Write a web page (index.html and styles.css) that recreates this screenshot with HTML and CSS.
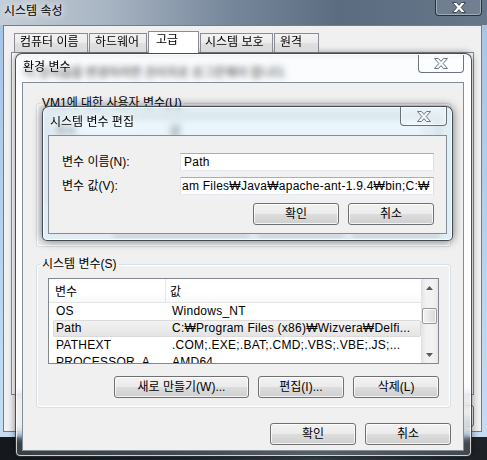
FILE: index.html
```html
<!DOCTYPE html>
<html lang="ko">
<head>
<meta charset="utf-8">
<title>시스템 속성</title>
<link rel="stylesheet" href="styles.css">
</head>
<body>
<div class="desktop">

  <div class="window outer">
    <div class="titlebar outer-titlebar">
      <span class="title-text outer-title">시스템 속성</span>
      <div class="close-btn close-outer">
        <svg width="14" height="11" viewBox="0 0 14 11"><polygon class="xglyph" points="0.5,0.5 4.5,0.5 7,3.3 9.5,0.5 13.5,0.5 9.2,5.5 13.5,10.5 9.5,10.5 7,7.7 4.5,10.5 0.5,10.5 4.8,5.5"/></svg>
      </div>
    </div>
    <div class="client outer-client">
      <div class="tabs">
        <div class="tab t1">컴퓨터 이름</div>
        <div class="tab t2">하드웨어</div>
        <div class="tab t3 selected">고급</div>
        <div class="tab t4">시스템 보호</div>
        <div class="tab t5">원격</div>
      </div>
      <div class="tabpage">
        <p class="admin-note">이 항목들을 변경하려면 관리자로 로그온해야 합니다.</p>
      </div>
      <div class="btn-row outer-buttons">
        <div class="btn">확인</div>
        <div class="btn">취소</div>
        <div class="btn">적용(A)</div>
      </div>
    </div>
  </div>

  <div class="window dialog env">
    <div class="titlebar">
      <span class="title-text env-title">환경 변수</span>
      <div class="close-btn close-env">
        <svg width="14" height="11" viewBox="0 0 14 11"><polygon class="xglyph light" points="0.5,0.5 4.5,0.5 7,3.3 9.5,0.5 13.5,0.5 9.2,5.5 13.5,10.5 9.5,10.5 7,7.7 4.5,10.5 0.5,10.5 4.8,5.5"/></svg>
      </div>
    </div>
    <div class="client env-client">
      <fieldset class="group user-group">
        <legend>VM1에 대한 사용자 변수(U)</legend>
        <div class="group-inner">
          <div class="listview">
            <div class="lv-body">
              <div class="lv-header"><div class="c1">변수</div><div class="c2">값</div></div>
            </div>
            <div class="scrollbar plain"></div>
          </div>
          <div class="btn-row group-buttons">
            <div class="btn wide"></div>
            <div class="btn"></div>
            <div class="btn"></div>
          </div>
        </div>
      </fieldset>

      <fieldset class="group sys-group">
        <legend>시스템 변수(S)</legend>
        <div class="group-inner">
          <div class="listview">
            <div class="lv-body">
              <div class="lv-header"><div class="c1">변수</div><div class="c2">값</div></div>
              <div class="lv-row"><div class="c1">OS</div><div class="c2">Windows_NT</div></div>
              <div class="lv-row selected"><div class="c1">Path</div><div class="c2">C:₩Program Files (x86)₩Wizvera₩Delfi...</div></div>
              <div class="lv-row"><div class="c1">PATHEXT</div><div class="c2">.COM;.EXE;.BAT;.CMD;.VBS;.VBE;.JS;...</div></div>
              <div class="lv-row"><div class="c1">PROCESSOR_A...</div><div class="c2">AMD64</div></div>
            </div>
            <div class="scrollbar">
              <div class="sb-arrow"><svg width="7" height="4" viewBox="0 0 7 4"><polygon points="3.5,0 7,4 0,4" fill="#5a5a5a"/></svg></div>
              <div class="sb-track"><div class="sb-thumb"></div></div>
              <div class="sb-arrow"><svg width="7" height="4" viewBox="0 0 7 4"><polygon points="0,0 7,0 3.5,4" fill="#5a5a5a"/></svg></div>
            </div>
          </div>
          <div class="btn-row group-buttons">
            <div class="btn wide">새로 만들기(W)...</div>
            <div class="btn">편집(I)...</div>
            <div class="btn">삭제(L)</div>
          </div>
        </div>
      </fieldset>

      <div class="btn-row ok-row">
        <div class="btn">확인</div>
        <div class="btn">취소</div>
      </div>
    </div>
  </div>

  <div class="window dialog edit">
    <div class="titlebar">
      <span class="title-text edit-title">시스템 변수 편집</span>
      <div class="close-btn close-edit">
        <svg width="14" height="11" viewBox="0 0 14 11"><polygon class="xglyph light" points="0.5,0.5 4.5,0.5 7,3.3 9.5,0.5 13.5,0.5 9.2,5.5 13.5,10.5 9.5,10.5 7,7.7 4.5,10.5 0.5,10.5 4.8,5.5"/></svg>
      </div>
    </div>
    <div class="client edit-client">
      <div class="form">
        <div class="label">변수 이름(N):</div>
        <div class="textbox">Path</div>
        <div class="label">변수 값(V):</div>
        <div class="textbox scrolled">am Files₩Java₩apache-ant-1.9.4₩bin;C:₩</div>
      </div>
      <div class="btn-row edit-buttons">
        <div class="btn">확인</div>
        <div class="btn">취소</div>
      </div>
    </div>
  </div>

</div>
</body>
</html>
```

FILE: styles.css
```css
* { box-sizing: border-box; }

html, body {
  margin: 0;
  padding: 0;
}

body {
  width: 487px;
  height: 460px;
  overflow: hidden;
  font-family: "Liberation Sans", "Noto Sans CJK KR", sans-serif;
  font-size: 12px;
  line-height: 14px;
  color: #000;
}

.desktop {
  position: relative;
  width: 487px;
  height: 460px;
  overflow: hidden;
  background: linear-gradient(to right, #15181c 0%, #23272c 40%, #3a4046 65%, #1d2125 100%);
}

/* ---------- generic window parts ---------- */
.window {
  position: absolute;
  display: flex;
  flex-direction: column;
}

.titlebar {
  display: flex;
  align-items: flex-start;
  flex: none;
}

.title-text {
  white-space: nowrap;
  text-shadow: 0 0 6px rgba(255, 255, 255, 0.95), 0 0 12px rgba(255, 255, 255, 0.8);
}

.close-btn {
  margin-left: auto;
  display: flex;
  align-items: center;
  justify-content: center;
  border: 1px solid rgba(60, 70, 82, 0.75);
  border-top: none;
  border-radius: 0 0 4px 4px;
  box-shadow: inset 0 0 0 1px rgba(255, 255, 255, 0.55);
  background: rgba(255, 255, 255, 0.25);
}

.xglyph {
  fill: #ffffff;
  stroke: #3b4450;
  stroke-width: 1;
  stroke-linejoin: round;
}
.xglyph.light {
  fill: #f4f6f8;
  stroke: #6c7885;
}

.client {
  background: #f0f0f0;
  border: 1px solid rgba(70, 88, 104, 0.65);
}

/* ---------- outer window (시스템 속성) ---------- */
.outer {
  left: 0;
  top: 0;
  width: 487px;
  height: 437px;
  padding: 0 5px 5px 3px;
  background:
    linear-gradient(to right, #c5ced8 0%, #a7b4c2 22%, #75869a 48%, #5b6c81 70%, #667789 100%) top / 100% 25px no-repeat,
    linear-gradient(to bottom, #a6c3e2 0%, #b9d3ee 60%, #c6dcf2 100%);
}

.outer-titlebar {
  height: 25px;
  padding-left: 1px;
}

.outer-title {
  padding-top: 4px;
}

.close-outer {
  width: 47px;
  height: 20px;
  margin-top: -4px;
  border-color: rgba(30, 36, 46, 0.85);
  background: rgba(255, 255, 255, 0.08);
  box-shadow: inset 0 0 0 1px rgba(255, 255, 255, 0.35);
  padding-top: 4px;
}

.outer-client {
  flex: 1;
  display: flex;
  flex-direction: column;
  padding: 5px 7px 0 7px;
  border-color: #6f7e8d;
}

.tabs {
  display: flex;
  align-items: flex-end;
  height: 21px;
  margin-left: 3px;
  position: relative;
  z-index: 1;
}

.tab {
  height: 19px;
  line-height: 17px;
  padding-left: 5px;
  white-space: nowrap;
  border: 1px solid #898c95;
  border-bottom: none;
  background: linear-gradient(#f3f3f3, #ebebeb 50%, #e0e0e0 50%, #d9d9d9);
}
.tab + .tab { margin-left: 1px; }
.t1 { width: 74px; }
.t2 { width: 58px; padding-left: 5px; }
.t3 { width: 51px; }
.t4 { width: 73px; padding-left: 4px; }
.t5 { width: 45px; padding-left: 5px; }

.tab.selected {
  height: 22px;
  margin-bottom: -1px;
  line-height: 14px;
  padding-top: 1px;
  padding-left: 7px;
  background: #ffffff;
}

.tabpage {
  height: 343px;
  border: 1px solid #898c95;
  background: #ffffff;
  padding: 13px 12px;
}

.admin-note {
  margin: 0;
  white-space: nowrap;
}

.btn-row {
  display: flex;
  justify-content: flex-end;
  gap: 9px;
}

.outer-buttons {
  margin-top: 10px;
}

.btn {
  width: 86px;
  height: 22px;
  display: flex;
  align-items: center;
  justify-content: center;
  white-space: nowrap;
  border: 1px solid #707070;
  border-radius: 3px;
  background: linear-gradient(#f2f2f2, #ebebeb 50%, #dddddd 50%, #cfcfcf);
  box-shadow: inset 0 0 0 1px rgba(255, 255, 255, 0.75);
}
.btn.wide { width: 135px; }

/* ---------- dialogs ---------- */
.dialog {
  border: 1px solid rgba(28, 36, 46, 0.8);
  border-radius: 7px 7px 5px 5px;
  -webkit-backdrop-filter: blur(3px);
  backdrop-filter: blur(3px);
}

.env {
  left: 15px;
  top: 53px;
  width: 457px;
  height: 404px;
  padding: 0 7px 5px 6px;
  background: rgba(226, 240, 250, 0.18);
  box-shadow: inset 0 0 0 1px rgba(255, 255, 255, 0.75), 0 0 7px rgba(0, 0, 0, 0.45);
}

.env .titlebar { height: 28px; }
.env-title { padding: 6px 0 0 1px; }

.close-env {
  width: 46px;
  height: 18px;
  margin-top: 1px;
}

.env-client {
  flex: 1;
  display: flex;
  flex-direction: column;
  padding: 13px 12px 0 13px;
}

.group {
  margin: 0;
  padding: 0;
  min-width: 0;
  border: 1px solid #d5dfe5;
  border-radius: 3px;
  box-shadow: inset 0 0 0 1px #ffffff;
}

.group legend {
  margin-left: 3px;
  padding: 0 2px;
  line-height: 14px;
}

.group-inner {
  padding: 7px 11px 9px 11px;
}

.sys-group { margin-top: 10px; }

.listview {
  display: flex;
  height: 86px;
  border: 1px solid #828790;
  background: #ffffff;
  overflow: hidden;
}

.lv-body {
  flex: 1;
  min-width: 0;
  overflow: hidden;
}

.lv-header {
  display: flex;
  height: 24px;
  border-bottom: 1px solid #e5e5e5;
  background: linear-gradient(#ffffff, #ffffff 60%, #f7f8fa);
}
.lv-header .c1 {
  width: 117px;
  padding: 6px 0 0 6px;
  border-right: 1px solid #e5e5e5;
}
.lv-header .c2 {
  flex: 1;
  padding: 6px 0 0 4px;
}

.lv-row {
  display: flex;
  height: 17px;
  margin-left: 4px;
  line-height: 15px;
  letter-spacing: 0.25px;
  white-space: nowrap;
  border: 1px solid transparent;
  border-radius: 2px;
}
.lv-row .c1 {
  width: 113px;
  padding-left: 2px;
  overflow: hidden;
}
.lv-row .c2 {
  flex: 1;
  padding-left: 5px;
  overflow: hidden;
}
.lv-row.selected {
  border-color: #dadada;
  background: linear-gradient(#f2f2f2, #e4e4e4);
}

.scrollbar {
  width: 17px;
  flex: none;
  display: flex;
  flex-direction: column;
  background: linear-gradient(to right, #e2e2e2, #f2f2f2 30%, #f2f2f2 70%, #e8e8e8);
}
.scrollbar.plain { background: #f0f0f0; }

.sb-arrow {
  height: 17px;
  display: flex;
  align-items: center;
  justify-content: center;
}

.sb-track { flex: 1; }

.sb-thumb {
  margin: 12px 1px 0 1px;
  height: 16px;
  border: 1px solid #979797;
  border-radius: 2px;
  background: linear-gradient(to right, #f4f4f4, #e6e6e6 50%, #d8d8d8);
  box-shadow: inset 0 0 0 1px rgba(255, 255, 255, 0.8);
}

.group-buttons { margin-top: 12px; }

.ok-row {
  margin-top: 15px;
}

/* ---------- edit dialog ---------- */
.edit {
  left: 42px;
  top: 106px;
  width: 411px;
  height: 135px;
  padding: 0 5px 6px 5px;
  background: rgba(205, 234, 248, 0.42);
  box-shadow: inset 0 0 0 1px rgba(255, 255, 255, 0.8), 0 0 10px rgba(0, 0, 0, 0.55);
}

.edit .titlebar { height: 28px; }
.edit-title { padding: 8px 0 0 2px; }

.close-edit {
  width: 47px;
  height: 19px;
}

.edit-client {
  flex: 1;
  padding: 17px 12px 0 13px;
}

.form {
  display: grid;
  grid-template-columns: 118px 254px;
  row-gap: 6px;
  align-items: center;
}

.textbox {
  height: 18px;
  border: 1px solid;
  border-color: #abadb3 #dbdfe6 #e3e9ef #e2e3ea;
  background: #ffffff;
  padding-left: 3px;
  line-height: 16px;
  letter-spacing: 0.25px;
  white-space: nowrap;
  overflow: hidden;
}
.textbox.scrolled { padding-left: 1px; }

.edit-buttons { margin-top: 8px; }
```
